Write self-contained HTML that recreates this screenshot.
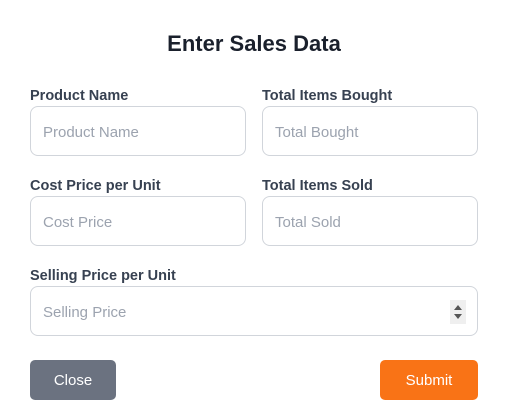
<!DOCTYPE html>
<html><head><style>
body{margin:0;width:505px;height:418px;background:#fff;font-family:"Liberation Sans",sans-serif;position:relative;overflow:hidden}
.t{position:absolute;left:0;width:508px;top:31px;text-align:center;font-size:22px;font-weight:bold;color:#1a202c}
.l{position:absolute;font-size:14.5px;font-weight:bold;color:#374151}
.i{position:absolute;width:214px;height:48px;border:1px solid #d1d5db;border-radius:8px;box-sizing:content-box}
.i span{position:absolute;left:12px;top:17px;font-size:15px;color:#9ca3af}
.b{position:absolute;top:360px;height:40px;border-radius:5px;color:#fff;font-size:15px;text-align:center;line-height:42px}
</style></head><body>
<div class="t">Enter Sales Data</div>
<div class="l" style="left:30px;top:88px">Product Name</div>
<div class="l" style="left:262px;top:88px">Total Items Bought</div>
<div class="i" style="left:30px;top:106px"><span>Product Name</span></div>
<div class="i" style="left:262px;top:106px"><span>Total Bought</span></div>
<div class="l" style="left:30px;top:178px">Cost Price per Unit</div>
<div class="l" style="left:262px;top:178px">Total Items Sold</div>
<div class="i" style="left:30px;top:196px"><span>Cost Price</span></div>
<div class="i" style="left:262px;top:196px"><span>Total Sold</span></div>
<div class="l" style="left:30px;top:268px">Selling Price per Unit</div>
<div class="i" style="left:30px;top:286px;width:446px"><span>Selling Price</span>
<svg style="position:absolute;left:419px;top:13px" width="16" height="24"><rect width="16" height="24" fill="#efefef"/><path d="M4 10L8 5L12 10Z M4 14L12 14L8 19Z" fill="#555"/></svg></div>
<div class="b" style="left:30px;width:86px;background:#6b7280">Close</div>
<div class="b" style="left:380px;width:98px;background:#f97316">Submit</div>
</body></html>
